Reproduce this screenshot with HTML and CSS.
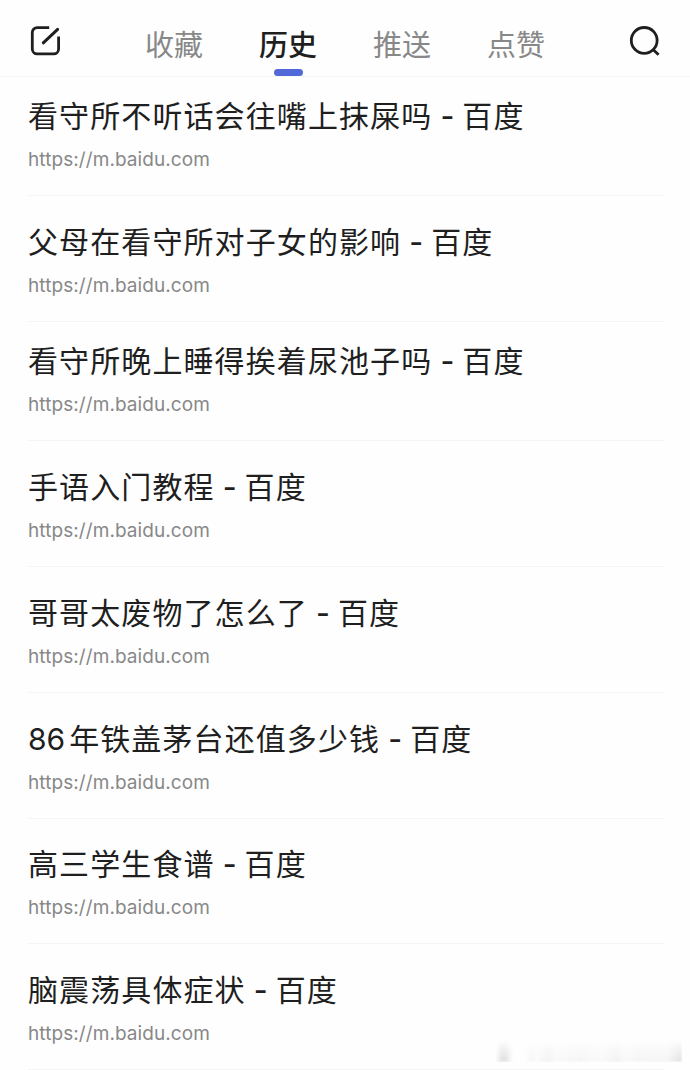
FILE: index.html
```html
<!DOCTYPE html>
<html lang="zh-CN">
<head>
<meta charset="utf-8">
<title>历史</title>
<link rel="stylesheet" href="styles.css">
</head>
<body>
<header class="topbar">
  <svg class="icon edit" viewBox="0 0 32 32"><path d="M20.2 2.6H8.2a4.9 4.9 0 0 0-4.9 4.9V24a4.9 4.9 0 0 0 4.9 4.9H24.700a4.900 4.900 0 0 0 4.900-4.900V11.600"/><path class="pen" d="M14.300 17.800L28.600 4.300"/></svg>
  <nav class="tabs">
    <span class="tab">收藏</span>
    <span class="tab active">历史</span>
    <span class="tab">推送</span>
    <span class="tab">点赞</span>
  </nav>
  <svg class="icon search" viewBox="0 0 32 32"><circle cx="15.2" cy="15.4" r="12.9"/><path d="M24 24.500l5.600 5.200"/></svg>
</header>
<main class="history">
  <article class="row short"><h2 class="title">看守所不听话会往嘴上抹屎吗<span class="dash">-</span>百度</h2><p class="url">https://m.baidu.com</p></article>
  <article class="row"><h2 class="title">父母在看守所对子女的影响<span class="dash">-</span>百度</h2><p class="url">https://m.baidu.com</p></article>
  <article class="row short"><h2 class="title">看守所晚上睡得挨着尿池子吗<span class="dash">-</span>百度</h2><p class="url">https://m.baidu.com</p></article>
  <article class="row"><h2 class="title">手语入门教程<span class="dash">-</span>百度</h2><p class="url">https://m.baidu.com</p></article>
  <article class="row"><h2 class="title">哥哥太废物了怎么了<span class="dash">-</span>百度</h2><p class="url">https://m.baidu.com</p></article>
  <article class="row"><h2 class="title"><span class="num">86</span>年铁盖茅台还值多少钱<span class="dash">-</span>百度</h2><p class="url">https://m.baidu.com</p></article>
  <article class="row"><h2 class="title">高三学生食谱<span class="dash">-</span>百度</h2><p class="url">https://m.baidu.com</p></article>
  <article class="row"><h2 class="title">脑震荡具体症状<span class="dash">-</span>百度</h2><p class="url">https://m.baidu.com</p></article>
</main>
<div class="smudge"></div>
</body>
</html>
```
FILE: styles.css
```css
* { box-sizing: border-box; }
body {
  margin: 0;
  width: 690px;
  height: 1070px;
  overflow: hidden;
  position: relative;
  background: #fefefe;
  color: #1f1f1f;
  font-family: Inter, "Noto Sans CJK SC", sans-serif;
}
.topbar {
  height: 77px;
  padding: 0 29px;
  display: flex;
  justify-content: space-between;
  border-bottom: 1px solid #f7f7f7;
}
.icon {
  width: 32px;
  height: 32px;
  margin-top: 25px;
  fill: none;
  stroke: #1f1f1f;
  stroke-width: 2.8;
}
.pen { stroke-width: 3; stroke-linecap: round; }
.tabs { display: flex; gap: 56px; }
.tab {
  width: 58px;
  height: 76px;
  padding-top: 23px;
  display: flex;
  flex-direction: column;
  align-items: center;
  font: 400 29px/40px "Noto Sans CJK SC", sans-serif;
  color: #888;
}
.active { font-weight: 500; color: #1f1f1f; }
.active::after {
  content: "";
  width: 29px;
  height: 7px;
  margin-top: 6px;
  border-radius: 4px;
  background: #5068d8;
}
.history { padding: 0 26px 0 28px; }
.row {
  height: 125.7px;
  display: flex;
  flex-direction: column;
  justify-content: flex-end;
  border-bottom: 1px solid #f5f5f5;
}
.short { height: 119.4px; }
.title {
  margin: 0;
  font-size: 30px;
  line-height: 44px;
  font-weight: 400;
  letter-spacing: 1.1px;
  white-space: nowrap;
}
.dash {
  display: inline-block;
  width: 30px;
  text-align: center;
  letter-spacing: 0;
  font-weight: 500;
}
.num { letter-spacing: 0; margin-right: 4px; }
.url {
  margin: 10px 0 23px;
  font-size: 19px;
  line-height: 24px;
  letter-spacing: .08px;
  color: #888;
}
.smudge {
  position: absolute;
  left: 496px;
  top: 1040px;
  width: 186px;
  height: 22px;
  filter: blur(1.5px);
  background: linear-gradient(90deg, transparent, #ddd 3%, #ddd 5%, transparent 9%, transparent 16%, #f5f5f5 19%, #fbfbfb 22%, #f1f1f1 28%, #f9f9f9 32%, #f4f4f4 45%, #f9f9f9 57%, #f0f0f0 65%, #f9f9f9 70%, #f4f4f4 76%, #f5f5f5 92%, #ddd 100%);
  -webkit-mask-image: linear-gradient(transparent, #000);
  mask-image: linear-gradient(transparent, #000);
}
```
